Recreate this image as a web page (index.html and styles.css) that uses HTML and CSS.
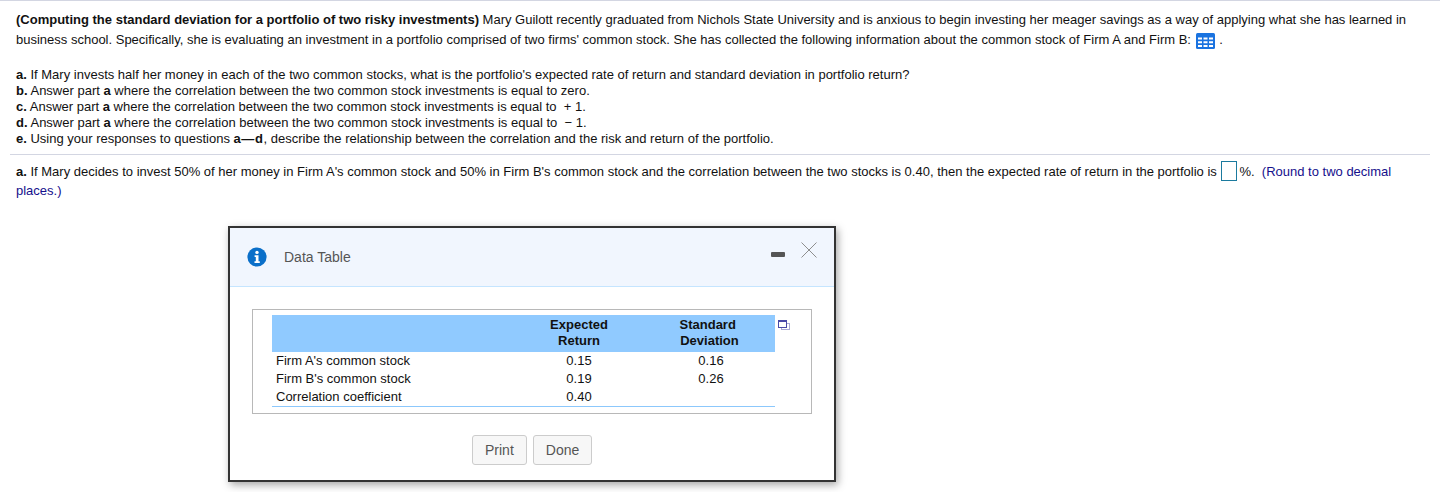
FILE: index.html
```html
<!DOCTYPE html>
<html lang="en">
<head>
  <meta charset="UTF-8">
  <meta name="viewport" content="width=device-width, initial-scale=1.0">
  <title>Data Table</title>
  <link rel="stylesheet" href="styles.css">
</head>
<body>
  <main class="question">
    <p class="intro">
      <b>(Computing the standard deviation for a portfolio of two risky investments)</b> Mary Guilott recently graduated from Nichols State University and is anxious to begin investing her meager savings as a way of applying what she has learned in<br>
      business school. Specifically, she is evaluating an investment in a portfolio comprised of two firms' common stock. She has collected the following information about the common stock of Firm A and Firm B:
      <svg class="gridIcon" width="19" height="16" viewBox="0 0 19 16">
        <rect width="19" height="16" rx="1.5" fill="#1a73e0"/>
        <g fill="#fff">
          <rect x="2" y="4.5" width="4" height="2"/><rect x="7.5" y="4.5" width="4" height="2"/><rect x="13" y="4.5" width="4" height="2"/>
          <rect x="2" y="8.25" width="4" height="2"/><rect x="7.5" y="8.25" width="4" height="2"/><rect x="13" y="8.25" width="4" height="2"/>
          <rect x="2" y="12" width="4" height="2"/><rect x="7.5" y="12" width="4" height="2"/><rect x="13" y="12" width="4" height="2"/>
        </g>
      </svg> .
    </p>
    <ol class="parts">
      <li><b>a.</b> If Mary invests half her money in each of the two common stocks, what is the portfolio's expected rate of return and standard deviation in portfolio return?</li>
      <li><b>b.</b> Answer part <b>a</b> where the correlation between the two common stock investments is equal to zero.</li>
      <li><b>c.</b> Answer part <b>a</b> where the correlation between the two common stock investments is equal to &nbsp;+ 1.</li>
      <li><b>d.</b> Answer part <b>a</b> where the correlation between the two common stock investments is equal to &nbsp;− 1.</li>
      <li><b>e.</b> Using your responses to questions <b class="range">a—d</b>, describe the relationship between the correlation and the risk and return of the portfolio.</li>
    </ol>
    <hr class="rule">
    <p class="answer">
      <b>a.</b> If Mary decides to invest 50% of her money in Firm A's common stock and 50% in Firm B's common stock and the correlation between the two stocks is 0.40, then the expected rate of return in the portfolio is <span class="blank"></span>%. &nbsp;<span class="hint">(Round to two decimal<br>places.)</span>
    </p>
  </main>

  <section class="dialog">
    <header class="dialogHead">
      <svg class="infoIcon" width="20" height="20" viewBox="0 0 20 20">
        <circle cx="10" cy="10" r="9.6" fill="#0a6fc9"/>
        <circle cx="10" cy="5.4" r="1.7" fill="#fff"/>
        <path d="M7.6 8.3h3.9v6h1.3v1.6H7.5v-1.6h1.3v-4.4H7.6z" fill="#fff"/>
      </svg>
      <span class="dialogTitle">Data Table</span>
      <span class="minimize"></span>
      <svg class="closeIcon" width="16" height="16" viewBox="0 0 16 16">
        <path d="M.5.5l15 15M15.5.5l-15 15" stroke="#8e8e8e" stroke-width="1" fill="none"/>
      </svg>
    </header>
    <div class="dialogBody">
      <div class="tableBox">
        <table class="dataTable">
          <thead>
            <tr>
              <th class="labelCol"></th>
              <th class="expectedCol">Expected<br>Return</th>
              <th>Standard&nbsp;<br>Deviation</th>
            </tr>
          </thead>
          <tbody>
            <tr><td>Firm A's common stock</td><td class="num">0.15</td><td class="num dev">0.16</td></tr>
            <tr><td>Firm B's common stock</td><td class="num">0.19</td><td class="num dev">0.26</td></tr>
            <tr><td>Correlation coefficient</td><td class="num">0.40</td><td class="num dev"></td></tr>
          </tbody>
        </table>
        <svg class="copyIcon" width="12" height="10" viewBox="0 0 12 10">
          <rect x="3.5" y="3.5" width="8" height="6" fill="#fff" stroke="#a9a9d6"/>
          <rect x=".5" y=".5" width="8" height="7" fill="#fff" stroke="#4a4aa8"/>
          <rect x="0" y="0" width="9" height="2" fill="#4a4aa8"/>
        </svg>
      </div>
      <div class="buttons">
        <button type="button">Print</button>
        <button type="button">Done</button>
      </div>
    </div>
  </section>
</body>
</html>
```

FILE: styles.css
```css
html, body {
  margin: 0;
  padding: 0;
}

body {
  height: 492px;
  overflow: hidden;
  background: #fff;
  color: #111;
  font-family: "Liberation Sans", Arial, sans-serif;
  font-size: 13px;
  position: relative;
}

.question {
  border-top: 1px solid #d3d6e2;
  padding: 9px 10px 0 16px;
}

.intro {
  margin: 0;
  line-height: 20px;
  white-space: nowrap;
}

.gridIcon {
  vertical-align: -5px;
  margin: 0 1px;
}

.parts {
  list-style: none;
  margin: 17px 0 0;
  padding: 0;
  line-height: 16px;
  white-space: nowrap;
}

.range {
  letter-spacing: .6px;
}

.rule {
  border: none;
  border-top: 1px solid #d3d6e2;
  margin: 7px 0 0 -6px;
}

.answer {
  margin: 6px 0 0;
  line-height: 19px;
  white-space: nowrap;
}

.blank {
  display: inline-block;
  width: 14px;
  height: 18px;
  margin: 0 2px 0 1px;
  border: 1px solid #1b7a9e;
  vertical-align: -5px;
}

.hint {
  color: #15108c;
}

/* dialog floats over the question */
.dialog {
  position: absolute;
  left: 228px;
  top: 226px;
  width: 604px;
  height: 252px;
  background: #fff;
  border: 2px solid #333;
  box-shadow: 2px 3px 8px rgba(0, 0, 0, .35);
}

.dialogHead {
  display: flex;
  align-items: center;
  height: 58px;
  padding: 0 17px;
  background: #f1f6fe;
  border-bottom: 1px solid #c5e5ff;
}

.dialogTitle {
  margin-left: 17px;
  font-size: 14px;
  color: #555;
}

.minimize {
  margin-left: auto;
  margin-top: -5px;
  width: 14px;
  height: 5px;
  background: #555;
  border-radius: 1px;
}

.closeIcon {
  margin-left: 16px;
  margin-top: -15px;
}

.dialogBody {
  padding: 22px 22px 0;
}

.tableBox {
  display: flex;
  align-items: flex-start;
  height: 98px;
  padding: 5px 0 0 19px;
  border: 1px solid #b8b8b8;
}

.dataTable {
  width: 503px;
  table-layout: fixed;
  border-collapse: collapse;
  border-bottom: 1px solid #8cc8fc;
  font-size: 13px;
}

.dataTable th {
  height: 35px;
  padding: 0 0 2px;
  background: #90caff;
  font-size: 13px;
  line-height: 16px;
  text-align: center;
}

.labelCol {
  width: 242px;
}

.expectedCol {
  width: 130px;
}

.dataTable td {
  height: 18px;
  padding: 0 0 0 4px;
  line-height: 18px;
}

.dataTable td.num {
  padding: 0;
  text-align: center;
}

.dataTable td.dev {
  padding-left: 3px;
}

.copyIcon {
  margin: 5px 0 0 3px;
}

.buttons {
  display: flex;
  gap: 6px;
  margin-top: 21px;
  padding-left: 220px;
}

.buttons button {
  height: 30px;
  padding: 0 12px;
  background: #f7f7f7;
  border: 1px solid #ccc;
  border-radius: 3px;
  color: #555;
  font-family: "Liberation Sans", Arial, sans-serif;
  font-size: 14px;
}
```
